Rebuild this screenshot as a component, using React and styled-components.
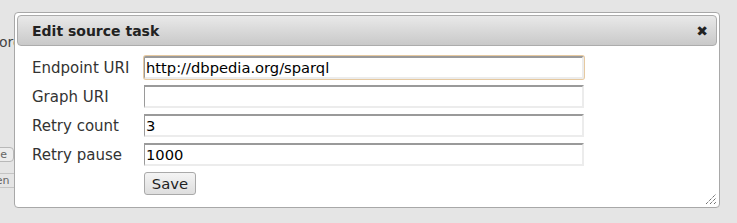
import React, { useEffect, useRef } from "react";
import styled, { createGlobalStyle } from "styled-components";

const Global = createGlobalStyle`
  html, body { margin: 0; padding: 0; }
  body {
    background: #e5e5e5;
    font-family: "DejaVu Sans", Verdana, sans-serif;
    width: 737px;
    height: 223px;
    overflow: hidden;
  }
`;

const Page = styled.div`
  position: relative;
  width: 737px;
  height: 223px;
  overflow: hidden;
`;

const Backdrop = styled.div`
  display: flex;
  flex-direction: column;
  align-items: flex-start;
  padding-top: 34px;
  font-size: 14px;
  color: #444;
`;

const BgText = styled.div`
  margin-left: -1px;
  white-space: nowrap;
  line-height: 16px;
`;

const BgButton = styled.div`
  margin-top: 97px;
  margin-left: -40px;
  width: 46px;
  height: 13px;
  border: 1px solid #b8b8b8;
  border-radius: 4px;
  background: #ececec;
  font-size: 11px;
  line-height: 13px;
  color: #666;
  text-align: right;
  padding-right: 6px;
`;

const BgTab = styled.div`
  margin-top: 11px;
  margin-left: -20px;
  width: 27px;
  height: 13px;
  padding-right: 13px;
  border-top: 1px solid #c4c4c4;
  border-bottom: 1px solid #c4c4c4;
  font-size: 11px;
  line-height: 13px;
  color: #666;
  text-align: right;
  overflow: hidden;
  white-space: nowrap;
`;

const Dialog = styled.div`
  position: absolute;
  left: 14px;
  top: 12px;
  width: 700px;
  height: 190px;
  padding: 2px;
  border: 1px solid #a8a8a8;
  border-radius: 4px;
  background: #fff;
  display: flex;
  flex-direction: column;
`;

const TitleBar = styled.div`
  height: 29px;
  border: 1px solid #acacac;
  border-radius: 4px;
  background: linear-gradient(#e9e9e9, #c9c9c9);
  display: flex;
  align-items: center;
  justify-content: space-between;
  padding: 0 8px 0 14px;
`;

const Title = styled.span`
  font-weight: bold;
  font-size: 14px;
  color: #222;
`;

const CloseIcon = styled.span`
  font-size: 14px;
  color: #222;
  line-height: 1;
`;

const Form = styled.div`
  display: grid;
  grid-template-columns: 112px 440px;
  grid-auto-rows: 23px;
  row-gap: 6px;
  align-items: center;
  padding: 10px 0 0 15px;
`;

const Label = styled.label`
  font-size: 15px;
  color: #333;
`;

const Input = styled.input`
  box-sizing: border-box;
  width: 440px;
  height: 23px;
  margin: 0;
  padding: 1px 1px;
  font-family: "DejaVu Sans", Verdana, sans-serif;
  font-size: 14.7px;
  color: #000;
  background: #fff;
  border-style: solid;
  border-width: 2px 2px 2px 1px;
  border-color: #9a9a9a #ececec #ececec #9a9a9a;
  outline: none;
  caret-color: #000;
  box-shadow: ${(p) => (p.$focused ? "0 0 0 1px #e6c9a0" : "none")};
  border-radius: ${(p) => (p.$focused ? "2px" : "0")};
`;

const SaveButton = styled.button`
  grid-column: 2;
  justify-self: start;
  box-sizing: border-box;
  width: 52px;
  height: 23px;
  margin: 0;
  padding: 0;
  font-family: "DejaVu Sans", Verdana, sans-serif;
  font-size: 14.8px;
  color: #222;
  border: 1px solid #a9a9a9;
  border-radius: 3px;
  background: linear-gradient(#f4f4f4, #dedede);
`;

const Grip = styled.svg`
  position: absolute;
  right: 2px;
  bottom: 2px;
`;

export default function App() {
  const ref = useRef(null);
  useEffect(() => {
    const el = ref.current;
    if (el) {
      el.focus();
      const n = el.value.length;
      el.setSelectionRange(n, n);
    }
  }, []);
  return (
    <>
      <Global />
      <Page>
        <Backdrop>
          <BgText>org/sparql endpoint</BgText>
          <BgButton>e</BgButton>
          <BgTab>Open</BgTab>
        </Backdrop>
        <Dialog>
          <TitleBar>
            <Title>Edit source task</Title>
            <CloseIcon>✖</CloseIcon>
          </TitleBar>
          <Form>
            <Label>Endpoint URI</Label>
            <Input ref={ref} $focused defaultValue="http://dbpedia.org/sparql" />
            <Label>Graph URI</Label>
            <Input defaultValue="" />
            <Label>Retry count</Label>
            <Input defaultValue="3" />
            <Label>Retry pause</Label>
            <Input defaultValue="1000" />
            <SaveButton>Save</SaveButton>
          </Form>
          <Grip width="12" height="12" viewBox="0 0 12 12">
            <g stroke="#333" strokeWidth="1" strokeDasharray="1 1">
              <line x1="1" y1="11" x2="11" y2="1" />
              <line x1="5" y1="11" x2="11" y2="5" />
              <line x1="9" y1="11" x2="11" y2="9" />
            </g>
          </Grip>
        </Dialog>
      </Page>
    </>
  );
}
